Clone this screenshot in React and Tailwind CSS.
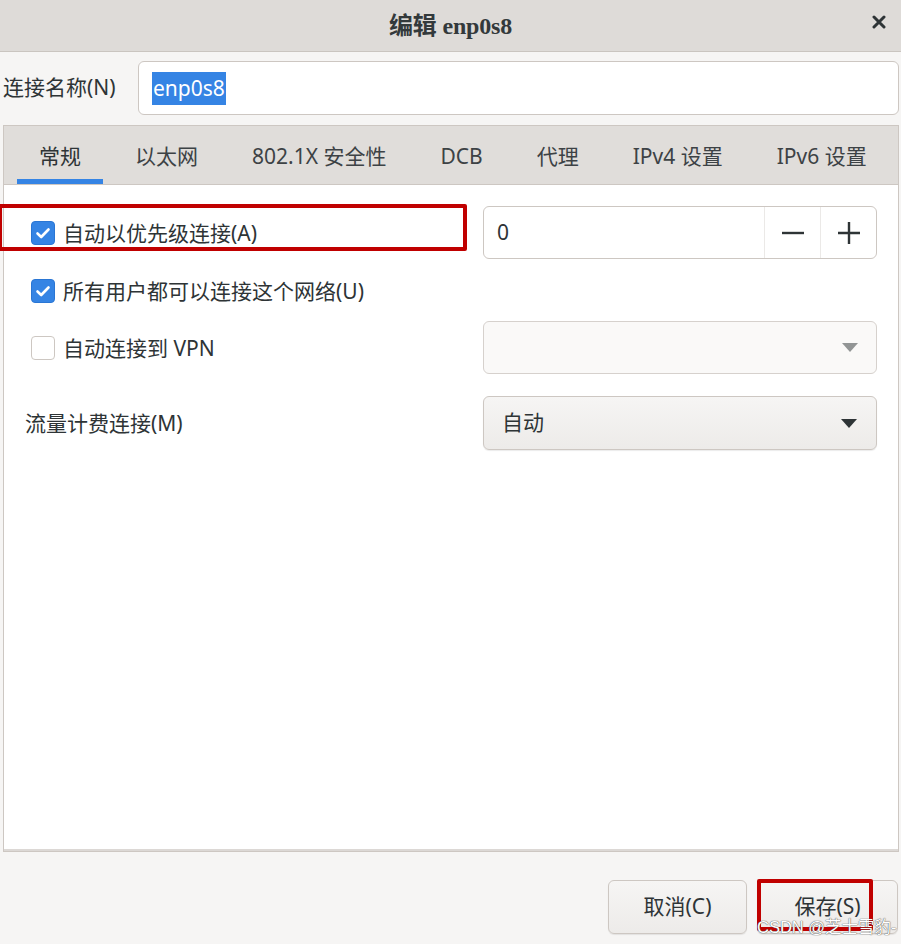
import React from "react";

const SANS = "font-['Noto_Sans','Noto_Sans_CJK_SC',sans-serif]";

function Check({ checked }) {
  if (checked) {
    return (
      <div className="w-[24px] h-[24px] rounded-[4px] bg-[#3584e4] border border-[#2a76d4] flex items-center justify-center shrink-0">
        <svg width="16" height="16" viewBox="0 0 16 16">
          <path d="M2.5 8.5 L6.2 12 L13.5 4.5" fill="none" stroke="white" strokeWidth="2.6" strokeLinecap="round" strokeLinejoin="round" />
        </svg>
      </div>
    );
  }
  return <div className="w-[24px] h-[24px] rounded-[4px] bg-white border border-[#cdc7c2] shrink-0" />;
}

function Arrow({ color }) {
  return (
    <svg width="16" height="9" viewBox="0 0 16 9">
      <path d="M0 0 L16 0 L8 9 Z" fill={color} />
    </svg>
  );
}

export default function App() {
  const tabs = ["常规", "以太网", "802.1X 安全性", "DCB", "代理", "IPv4 设置", "IPv6 设置"];
  return (
    <div className={`relative w-[901px] h-[944px] bg-[#f6f5f4] flex flex-col text-[#2e3436] ${SANS} overflow-hidden`}>
      {/* Title bar */}
      <div className="h-[52px] shrink-0 bg-[#dedbd8] border-b border-[#cac5c0] flex items-center justify-center relative">
        <span className="font-['Liberation_Serif','Noto_Sans_CJK_SC',serif] font-bold text-[24px] text-[#33393b] tracking-[-0.2px]">编辑 enp0s8</span>
        <div className="absolute right-[15px] top-[15px] w-[14px] h-[14px]">
          <svg width="14" height="14" viewBox="0 0 14 14">
            <path d="M2 2 L12 12 M12 2 L2 12" stroke="#2e3436" strokeWidth="3" strokeLinecap="round" />
          </svg>
        </div>
      </div>

      {/* Name row */}
      <div className="flex items-center mt-[9px] pl-[3px] pr-[2px] h-[54px]">
        <span className="text-[21px] w-[135px] shrink-0">连接名称(N)</span>
        <div className="flex-1 h-[54px] bg-white border border-[#cdc7c2] rounded-[6px] flex items-center pl-[13px]">
          <span className="bg-[#3584e4] text-white text-[21px] h-[33px] leading-[33px] px-[1px]">enp0s8</span>
        </div>
      </div>

      {/* Notebook */}
      <div className="mt-[10px] ml-[3px] mr-[2px] h-[727px] border border-[#cdc7c2] flex flex-col">
        <div className="h-[59px] shrink-0 bg-[#e0ddda] border-b border-[#cdc7c2] flex items-stretch pl-[13px] gap-[10px]">
          {tabs.map((t, i) => (
            <div key={t} className={`relative flex items-center px-[22px] pt-[3px] text-[21px] ${i === 0 ? "text-[#2e3436]" : "text-[#3d4245]"}`}>
              {t}
              {i === 0 && <div className="absolute left-0 right-0 bottom-0 h-[5px] bg-[#3584e4]" />}
            </div>
          ))}
        </div>
        <div className="flex-1 bg-white border-b-2 border-[#dcd8d5] px-[27px] pt-[21px] flex flex-col">
          <div className="flex items-center h-[53px]">
            <div className="flex items-center gap-[8px] flex-1">
              <Check checked />
              <span className="text-[21px] pt-[2px]">自动以优先级连接(A)</span>
            </div>
            <div className="w-[394px] h-[53px] mr-[-6px] bg-white border border-[#cdc7c2] rounded-[6px] flex items-stretch">
              <div className="flex-1 flex items-center pl-[13px] text-[21px]">0</div>
              <div className="w-[56px] border-l border-[#ebe9e7] flex items-center justify-center">
                <svg width="24" height="24" viewBox="0 0 24 24"><path d="M1 12 H23" stroke="#2e3436" strokeWidth="2.4" /></svg>
              </div>
              <div className="w-[56px] border-l border-[#ebe9e7] flex items-center justify-center">
                <svg width="24" height="24" viewBox="0 0 24 24"><path d="M1 12 H23 M12 1 V23" stroke="#2e3436" strokeWidth="2.4" /></svg>
              </div>
            </div>
          </div>

          <div className="flex items-center gap-[8px] h-[24px] mt-[20px]">
            <Check checked />
            <span className="text-[21px] pt-[2px]">所有用户都可以连接这个网络(U)</span>
          </div>

          <div className="flex items-center h-[53px] mt-[18px]">
            <div className="flex items-center gap-[8px] flex-1">
              <Check checked={false} />
              <span className="text-[21px] pt-[2px]">自动连接到 VPN</span>
            </div>
            <div className="w-[394px] h-[53px] mr-[-6px] bg-[#faf9f8] border border-[#d6d1cd] rounded-[6px] flex items-center justify-end pr-[18px]">
              <Arrow color="#929595" />
            </div>
          </div>

          <div className="flex items-center h-[54px] mt-[22px]">
            <div className="flex-1 text-[21px] ml-[-6px] pt-[2px]">流量计费连接(M)</div>
            <div className="w-[394px] h-[54px] mr-[-6px] bg-gradient-to-b from-[#f6f5f4] to-[#edebe9] border border-[#cdc7c2] rounded-[6px] shadow-[0_1px_1px_rgba(0,0,0,0.08)] flex items-center justify-between pl-[18px] pr-[19px]">
              <span className="text-[21px]">自动</span>
              <Arrow color="#2e3436" />
            </div>
          </div>
        </div>
      </div>

      {/* Buttons */}
      <div className="flex justify-end gap-[10px] mt-[28px] pr-[3px]">
        <div className="w-[139px] h-[54px] rounded-[6px] border border-[#cdc7c2] bg-gradient-to-b from-[#f6f5f4] to-[#edebe9] shadow-[0_1px_1px_rgba(0,0,0,0.08)] flex items-center justify-center text-[21px]">取消(C)</div>
        <div className="w-[141px] h-[54px] rounded-[6px] border border-[#cdc7c2] bg-gradient-to-b from-[#f6f5f4] to-[#edebe9] shadow-[0_1px_1px_rgba(0,0,0,0.08)] flex items-center justify-center text-[21px]">保存(S)</div>
      </div>

      {/* Annotation overlays */}
      <div className="absolute left-[-2px] top-[204px] w-[469px] h-[47px] border-[4px] border-[#c00000] rounded-[2px]" />
      <div className="absolute left-[757px] top-[879px] w-[116px] h-[52px] border-[4px] border-[#c00000] rounded-[2px]" />
      <div className="absolute left-[757px] top-[916px] text-[16.5px] leading-[22px] text-white [text-shadow:0_0_1px_#555,0_0_1px_#555] font-['Liberation_Sans','Noto_Sans_CJK_SC',sans-serif]">CSDN @芝士雪豹-</div>
    </div>
  );
}
